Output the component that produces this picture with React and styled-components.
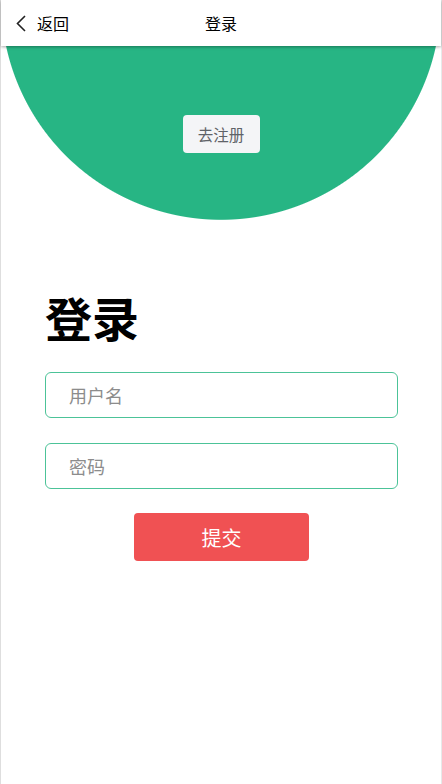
import React from "react";
import styled, { createGlobalStyle } from "styled-components";

const Global = createGlobalStyle`
  html, body { margin: 0; padding: 0; background: #fff; }
  body { font-family: "Noto Sans CJK SC", "Noto Sans", sans-serif; }
  * { box-sizing: border-box; }
`;

const Page = styled.div`
  width: 442px;
  min-height: 784px;
  border-left: 1px solid #dedede;
  border-right: 1px solid #e6eaea;
  background: #fff;
  display: flex;
  flex-direction: column;
`;

const Header = styled.header`
  height: 46px;
  display: grid;
  grid-template-columns: 1fr auto 1fr;
  align-items: center;
  background: #fff;
  box-shadow: 0 1px 3px rgba(0, 0, 0, 0.35);
  position: relative;
  z-index: 1;
  color: #000;
  font-size: 16px;
`;

const Back = styled.button`
  justify-self: start;
  display: flex;
  align-items: center;
  gap: 11px;
  margin-left: 15px;
  padding: 0;
  border: 0;
  background: none;
  font: inherit;
  color: inherit;
`;

const Title = styled.div`
  font-size: 16px;
`;

const Hero = styled.section`
  height: 174px;
  display: flex;
  justify-content: center;
  align-items: flex-start;
  padding-top: 69px;
  background: radial-gradient(
    circle 220px at 50% -46px,
    #27b584 219.3px,
    rgba(39, 181, 132, 0) 220.3px
  );
`;

const GhostButton = styled.button`
  width: 77px;
  height: 38px;
  border: 0;
  border-radius: 4px;
  background: #f4f5f7;
  color: #5f6368;
  font-family: inherit;
  font-size: 15.5px;
  padding: 0;
`;

const Form = styled.form`
  margin: 71px 0 0 44px;
  width: 353px;
  display: flex;
  flex-direction: column;
`;

const Heading = styled.h1`
  margin: 0 0 29px;
  font-size: 47px;
  line-height: 52px;
  font-weight: 700;
  color: #000;
`;

const Field = styled.input`
  height: 46px;
  width: 100%;
  border: 1px solid #4cc398;
  border-radius: 6px;
  padding: 0 23px;
  margin-bottom: ${(p) => p.$gap}px;
  font-family: inherit;
  font-size: 18px;
  color: #333;
  outline: none;
  &::placeholder { color: #8c8c8c; }
`;

const Submit = styled.button`
  align-self: center;
  width: 175px;
  height: 48px;
  border: 0;
  border-radius: 4px;
  background: #f05153;
  color: #fff;
  font-family: inherit;
  font-size: 20px;
  padding: 0;
`;

export default function App() {
  return (
    <>
      <Global />
      <Page>
        <Header>
          <Back type="button">
            <svg width="10" height="17" viewBox="0 0 10 17" fill="none">
              <polyline points="9,1 1.5,8.5 9,16" stroke="#222" strokeWidth="1.6" strokeLinejoin="miter" />
            </svg>
            返回
          </Back>
          <Title>登录</Title>
          <div />
        </Header>
        <Hero>
          <GhostButton type="button">去注册</GhostButton>
        </Hero>
        <Form onSubmit={(e) => e.preventDefault()}>
          <Heading>登录</Heading>
          <Field placeholder="用户名" $gap={25} />
          <Field placeholder="密码" type="password" $gap={24} />
          <Submit type="submit">提交</Submit>
        </Form>
      </Page>
    </>
  );
}
